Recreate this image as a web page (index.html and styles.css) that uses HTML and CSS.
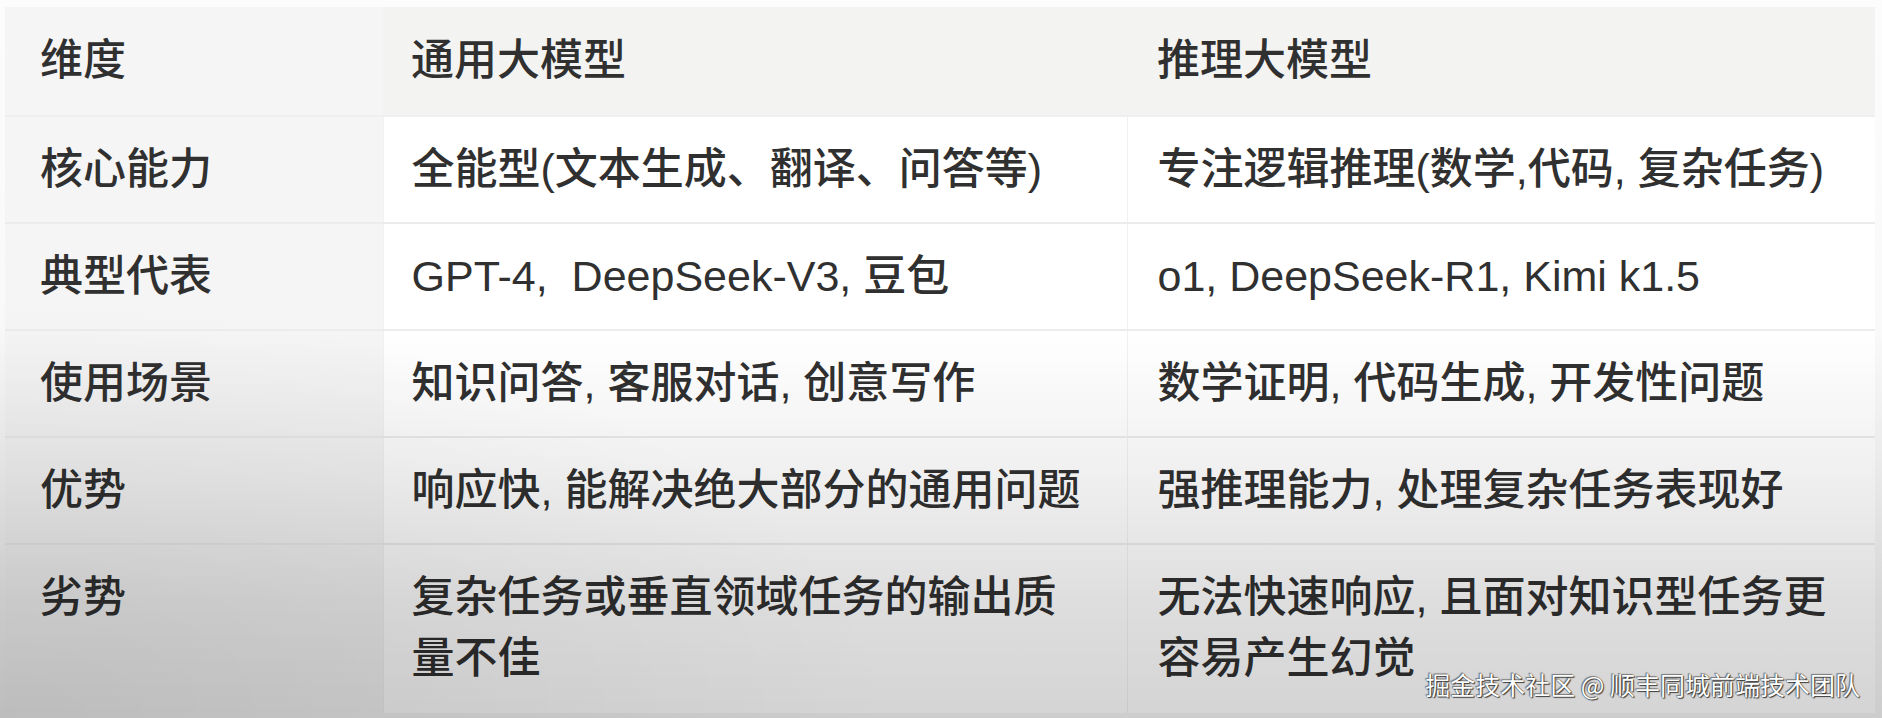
FILE: index.html
```html
<!DOCTYPE html>
<html lang="zh-CN">
<head>
<meta charset="utf-8">
<title>通用大模型 vs 推理大模型</title>
<link rel="stylesheet" href="styles.css">
</head>
<body>
<div class="frame">
  <table class="compare">
    <colgroup>
      <col class="c1">
      <col class="c2">
      <col class="c3">
    </colgroup>
    <thead>
      <tr>
        <th class="dim">维度</th>
        <th>通用大模型</th>
        <th>推理大模型</th>
      </tr>
    </thead>
    <tbody>
      <tr>
        <td class="dim">核心能力</td>
        <td>全能型(文本生成、翻译、问答等)</td>
        <td>专注逻辑推理(数学,代码, 复杂任务)</td>
      </tr>
      <tr>
        <td class="dim">典型代表</td>
        <td>GPT-4,&nbsp; DeepSeek-V3, 豆包</td>
        <td>o1, DeepSeek-R1, Kimi k1.5</td>
      </tr>
      <tr>
        <td class="dim">使用场景</td>
        <td>知识问答, 客服对话, 创意写作</td>
        <td>数学证明, 代码生成, 开发性问题</td>
      </tr>
      <tr>
        <td class="dim">优势</td>
        <td>响应快, 能解决绝大部分的通用问题</td>
        <td>强推理能力, 处理复杂任务表现好</td>
      </tr>
      <tr class="last">
        <td class="dim">劣势</td>
        <td>复杂任务或垂直领域任务的输出质量不佳</td>
        <td>无法快速响应, 且面对知识型任务更容易产生幻觉</td>
      </tr>
    </tbody>
  </table>
  <div class="shade" aria-hidden="true"></div>
  <div class="watermark">掘金技术社区 @ 顺丰同城前端技术团队</div>
</div>
</body>
</html>
```

FILE: styles.css
```css
html, body {
  margin: 0;
  padding: 0;
}

body {
  background: #f8f8f8;
  width: 1882px;
  height: 718px;
  overflow: hidden;
  font-family: "Liberation Sans", "Noto Sans CJK SC", sans-serif;
  color: #303030;
}

.frame {
  position: relative;
  width: 1882px;
  height: 718px;
  padding: 7px 7px 0 5px;
  box-sizing: border-box;
  background: linear-gradient(to bottom, #fcfcfc 0, #f6f6f6 100%);
}

.compare {
  border-collapse: collapse;
  table-layout: fixed;
  width: 1870px;
  font-size: 43px;
  line-height: 61px;
  background: #ffffff;
}

.c1 { width: 378px; }
.c2 { width: 744px; }
.c3 { width: 748px; }

.compare th,
.compare td {
  text-align: left;
  vertical-align: middle;
  font-weight: 500;
  padding: 22px 38px 22px 30px;
  border-bottom: 2px solid #ececec;
  white-space: normal;
}

.compare td + td {
  border-left: 1px solid #f1f1f1;
}

.compare th {
  background: #f3f3f2;
  padding-top: 23px;
  padding-bottom: 24px;
  border-bottom: 2px solid #efefef;
}

.compare .dim {
  background: #f5f5f5;
  padding-left: 35px;
}

.compare td:nth-child(2),
.compare th:nth-child(2) {
  padding-left: 28px;
  padding-right: 36px;
}

.compare .last td {
  border-bottom: none;
  padding-top: 22px;
  padding-bottom: 24px;
}

.compare .last .dim {
  vertical-align: top;
}

.shade {
  position: absolute;
  left: 0;
  top: 0;
  right: 0;
  bottom: 0;
  pointer-events: none;
  background:
    radial-gradient(ellipse 900px 420px at 0 718px, rgba(0, 0, 0, 0.08), rgba(0, 0, 0, 0) 100%),
    linear-gradient(to bottom, rgba(0, 0, 0, 0) 0, rgba(0, 0, 0, 0) 330px, rgba(0, 0, 0, 0.06) 470px, rgba(0, 0, 0, 0.13) 600px, rgba(0, 0, 0, 0.17) 718px);
}

.watermark {
  position: absolute;
  right: 22px;
  bottom: 18px;
  font-family: "Noto Sans CJK SC", sans-serif;
  font-size: 25px;
  line-height: 32px;
  color: #ffffff;
  text-shadow:
    0 0 1px #222,
    1px 1px 1px rgba(0, 0, 0, 0.7),
    -1px -1px 1px rgba(0, 0, 0, 0.4);
}
```
